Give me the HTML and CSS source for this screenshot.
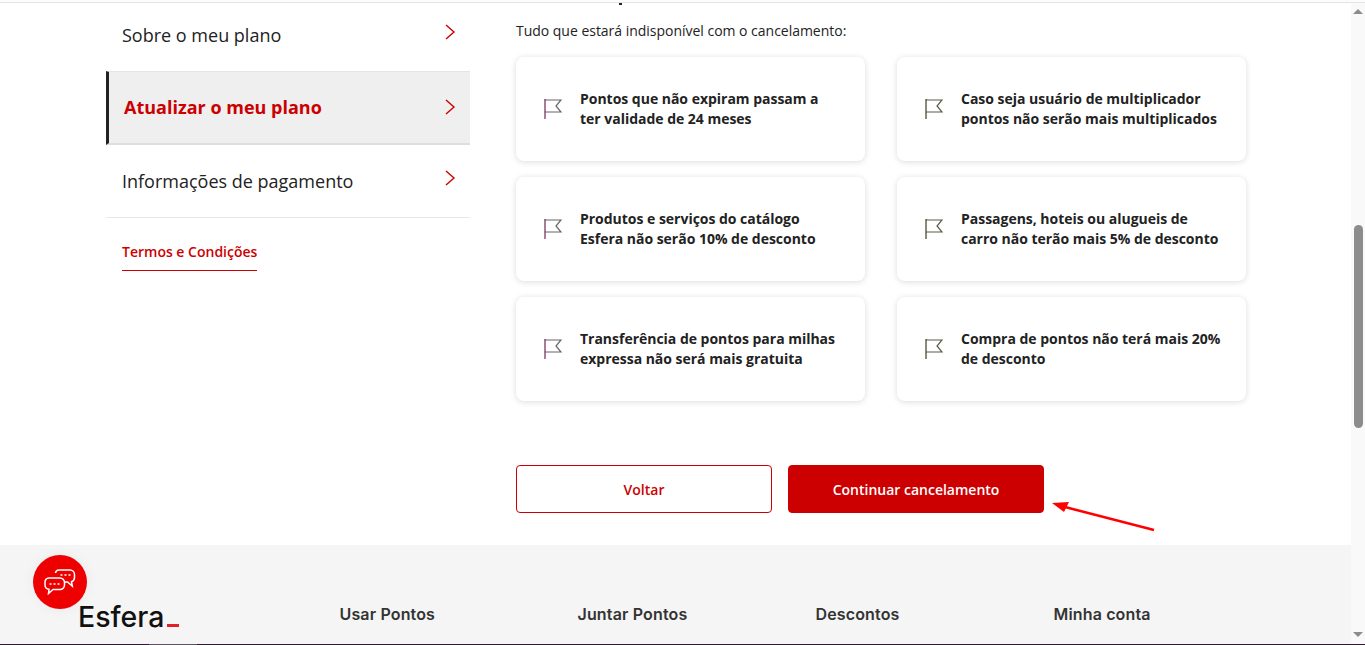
FILE: index.html
```html
<!DOCTYPE html>
<html lang="pt-BR">
<head>
<meta charset="utf-8">
<title>Esfera</title>
<link rel="stylesheet" href="styles.css">
</head>
<body>
<div class="topline"></div>
<div class="window">
  <div class="page">
    <main class="main">
      <aside class="sidebar">
        <a class="nav-row nav-first"><span>Sobre o meu plano</span><svg class="chev chev-up" viewBox="0 0 12 16"><path d="M2 1l8 7-8 7"/></svg></a>
        <a class="nav-row nav-active"><span>Atualizar o meu plano</span><svg class="chev" viewBox="0 0 12 16"><path d="M2 1l8 7-8 7"/></svg></a>
        <a class="nav-row nav-last"><span>Informações de pagamento</span><svg class="chev chev-up" viewBox="0 0 12 16"><path d="M2 1l8 7-8 7"/></svg></a>
        <a class="terms">Termos e Condições</a>
      </aside>
      <section class="content">
        <span class="cut-glyph"></span>
        <p class="lead">Tudo que estará indisponível com o cancelamento:</p>
        <div class="cards">
          <div class="card"><svg class="flag" viewBox="0 0 18 22"><path class="flag-body" d="M1 2h16l-5 6 5 6H1"/><path class="flag-pole" d="M1 1v20"/></svg><p>Pontos que não expiram passam a ter validade de 24 meses</p></div>
          <div class="card"><svg class="flag flag-alt" viewBox="0 0 18 22"><path class="flag-body" d="M1 2h16l-5 6 5 6H1"/><path class="flag-pole" d="M1 1v20"/></svg><p>Caso seja usuário de multiplicador pontos não serão mais multiplicados</p></div>
          <div class="card"><svg class="flag" viewBox="0 0 18 22"><path class="flag-body" d="M1 2h16l-5 6 5 6H1"/><path class="flag-pole" d="M1 1v20"/></svg><p>Produtos e serviços do catálogo Esfera não serão 10% de desconto</p></div>
          <div class="card"><svg class="flag flag-alt" viewBox="0 0 18 22"><path class="flag-body" d="M1 2h16l-5 6 5 6H1"/><path class="flag-pole" d="M1 1v20"/></svg><p>Passagens, hoteis ou alugueis de carro não terão mais 5% de desconto</p></div>
          <div class="card"><svg class="flag" viewBox="0 0 18 22"><path class="flag-body" d="M1 2h16l-5 6 5 6H1"/><path class="flag-pole" d="M1 1v20"/></svg><p>Transferência de pontos para milhas expressa não será mais gratuita</p></div>
          <div class="card"><svg class="flag flag-alt" viewBox="0 0 18 22"><path class="flag-body" d="M1 2h16l-5 6 5 6H1"/><path class="flag-pole" d="M1 1v20"/></svg><p>Compra de pontos não terá mais 20% de desconto</p></div>
        </div>
        <div class="actions">
          <button class="btn btn-outline">Voltar</button>
          <button class="btn btn-solid">Continuar cancelamento</button>
        </div>
      </section>
    </main>
    <footer class="footer">
      <div class="logo">Esfera<span class="logo-dash"></span></div>
      <nav class="foot-cols">
        <span>Usar Pontos</span>
        <span>Juntar Pontos</span>
        <span>Descontos</span>
        <span>Minha conta</span>
      </nav>
    </footer>
  </div>
  <div class="scrollbar">
    <span class="sb-arrow sb-up"></span>
    <div class="sb-track"><div class="sb-thumb"></div></div>
    <span class="sb-arrow sb-down"></span>
  </div>
</div>
<div class="bottomline"><span class="bl-dark bl-start"></span><span class="bl-light"></span><span class="bl-dark bl-rest"></span></div>
<svg class="annot" viewBox="0 0 110 36"><path d="M102 28L13 5" class="annot-line"/><path d="M0 1l17-1-5 10z" class="annot-head"/></svg>
<button class="chat" aria-label="Chat">
  <svg viewBox="0 0 32 26"><path d="M11.500 4a3.500 3.500 0 0 1 3.500-3h11a4.500 4.500 0 0 1 4.500 4.500v3a4.500 4.500 0 0 1-3 4.200l.8 4.300-4.800-4h-3"/><path d="M5 9h11a4.500 4.500 0 0 1 4.500 4.500v2.500a4.500 4.500 0 0 1-4.500 4.500H9l-4.500 4 .5-4.200a4.500 4.500 0 0 1-4-4.300v-2.500A4.500 4.500 0 0 1 5 9z"/><path class="dots" d="M5.500 15h2M9.500 15h2M13.500 15h2M16.500 6h2M20.500 6h2M24.500 6h2"/></svg>
</button>
</body>
</html>
```
FILE: styles.css
```css
* { box-sizing: border-box; }
html, body { margin: 0; height: 645px; overflow: hidden; background: #fff; }
body { font-family: "Open Sans", sans-serif; color: #222; position: relative; display: flex; flex-direction: column; }
p { margin: 0; }

.topline { height: 3px; flex: none; background: #fcfcfc; border-bottom: 1px solid #e4e4e4; }
.window { flex: 1; min-height: 0; display: flex; }
.page { flex: 1; min-width: 0; display: flex; flex-direction: column; }
.main { flex: none; height: 542px; display: flex; padding-left: 106px; gap: 46px; }

.sidebar { width: 364px; display: flex; flex-direction: column; }
.nav-row { display: flex; align-items: center; justify-content: space-between; font-size: 18px; color: #222; padding: 0 14px 0 16px; border-bottom: 1px solid #e8e8e8; }
.nav-first { height: 68px; padding-bottom: 4px; border-bottom: 0; }
.nav-active { height: 74px; background: #efefef; border-top: 1px solid #e4e4e4; border-bottom: 2px solid #dedede; border-left: 3px solid #222; padding-left: 15px; padding-bottom: 2px; font-weight: 700; color: #c00; }
.nav-last { height: 73px; }
.chev { width: 12px; height: 16px; fill: none; stroke: #c00; stroke-width: 1.4; }
.chev-up { margin-bottom: 6px; }
.terms { align-self: flex-start; margin: 24px 0 0 16px; padding-bottom: 8px; font-size: 14px; font-weight: 600; line-height: 20px; color: #c00; border-bottom: 1px solid #c00; }

.content { width: 730px; position: relative; }
.cut-glyph { position: absolute; left: 103px; top: 0; width: 3px; height: 2px; background: #222; }
.lead { font-size: 14px; line-height: 20px; margin-top: 18px; color: #222; letter-spacing: -.02px; }
.cards { display: grid; grid-template-columns: 349px 349px; gap: 16px 32px; margin-top: 16px; }
.card { height: 104px; background: #fff; border-radius: 8px; box-shadow: 0 1px 6px rgba(0,0,0,.14); display: flex; align-items: center; padding: 0 24px 0 28px; gap: 18px; }
.card p { font-size: 14px; line-height: 20px; font-weight: 700; color: #222; letter-spacing: -.02px; }
.flag { width: 18px; height: 22px; flex: none; fill: none; margin-top: -1px; }
.flag-body { stroke: #666; stroke-width: 1.2; }
.flag-pole { stroke: #6f2457; stroke-width: 1.2; }
.flag-alt .flag-body { stroke: #5c5c46; }
.flag-alt .flag-pole { stroke: #3b3b22; }

.actions { display: flex; gap: 16px; margin-top: 64px; }
.btn { width: 256px; height: 48px; border-radius: 4px; font: 600 14px "Open Sans", sans-serif; }
.btn-outline { background: #fff; border: 1px solid #c00; color: #c00; }
.btn-solid { background: #c00; border: 1px solid #c00; color: #fff; }

.footer { flex: 1; background: #f5f5f5; display: flex; padding: 55px 0 0 78px; }
.logo { width: 261.500px; height: 30px; margin-top: 3px; display: flex; align-items: flex-end; font: 500 28.500px/32px Inter, sans-serif; color: #111; }
.logo-dash { width: 12px; height: 3px; background: #e2202c; margin: 0 0 6px 3px; }
.foot-cols { display: grid; grid-template-columns: repeat(4, 238px); height: 28px; font: 600 16px/28px Inter, sans-serif; color: #333; letter-spacing: .15px; }

.bottomline { height: 1px; flex: none; display: flex; }
.bl-dark { background: #2f1a30; }
.bl-start { width: 149px; }
.bl-light { width: 48px; background: #5c5260; }
.bl-rest { flex: 1; }

.scrollbar { width: 14px; flex: none; background: #f9f9f9; display: flex; flex-direction: column; align-items: center; }
.sb-track { flex: 1; width: 100%; padding: 211px 2px 0 3px; }
.sb-thumb { height: 203px; background: #8c8c8c; border-radius: 5px; }
.sb-arrow { width: 0; height: 0; border-left: 5px solid transparent; border-right: 5px solid transparent; flex: none; }
.sb-up { border-bottom: 5px solid #8c8c8c; margin-top: 6px; }
.sb-down { border-top: 5px solid #8c8c8c; margin-bottom: 7px; }

.annot { position: absolute; left: 1052px; top: 502px; width: 110px; height: 36px; overflow: visible; }
.annot-line { stroke: #f00; stroke-width: 2.500; fill: none; }
.annot-head { fill: #f00; }

.chat { position: absolute; left: 33px; top: 555px; width: 54px; height: 54px; padding: 0; border: 0; border-radius: 50%; background: #ee0000; display: flex; align-items: center; justify-content: center; box-shadow: 0 0 14px rgba(0,0,0,.05); }
.chat svg { width: 32px; height: 26px; fill: none; stroke: #fff; stroke-width: 1.500; }
```
